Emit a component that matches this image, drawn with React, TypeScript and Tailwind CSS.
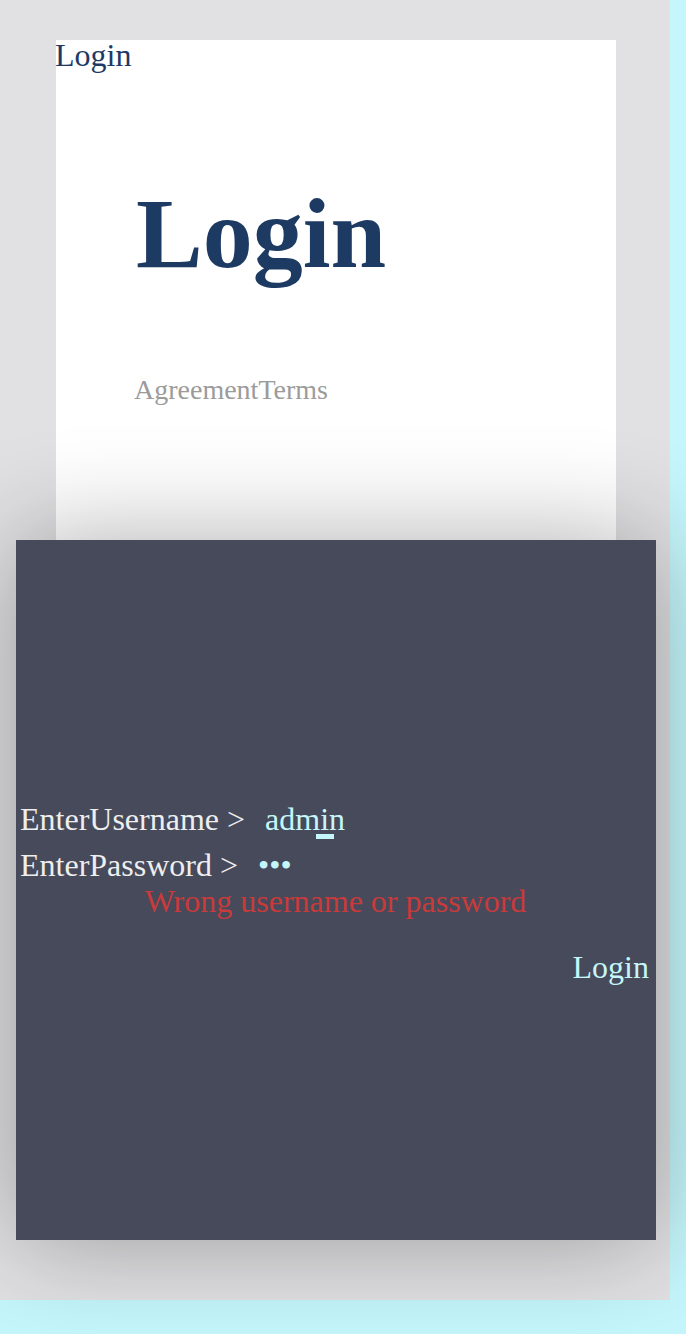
import React from 'react';

export default function App() {
    return (
        <div className="min-h-screen w-full bg-[#c4f6fb] font-['Liberation_Serif',serif]">
            {/* gray page area */}
            <div className="w-[670px] h-[1300px] bg-[#e1e1e3] pt-10">
                {/* white card */}
                <div className="ml-[56px] w-[560px] h-[500px] bg-white flex flex-col">
                    <div className="text-[32px] leading-[31px] text-[#1e3a64] -ml-px">Login</div>
                    <div className="pl-[80px] mt-[105px]">
                        <h1 className="text-[100px] leading-[115px] font-bold text-[#1d3a63]">Login</h1>
                        <div className="mt-[83px] -ml-0.5 text-[28px] leading-[32px] text-[#9b9b9b]">
                            <span>Agreement</span>
                            <span>Terms</span>
                        </div>
                    </div>
                </div>

                {/* dark console panel */}
                <div className="relative z-10 ml-4 w-[640px] h-[700px] bg-[#474a5a] shadow-[0_0_100px_rgba(0,0,0,0.32)] pt-[261px] px-1 text-[32px]">
                    <div className="flex items-start h-[46px] leading-[37px]">
                        <span className="text-[#eeeeee]">EnterUsername &gt;</span>
                        <span className="ml-5 text-[#c4f6fb]">
                            adm
                            <span className="relative">
                                i
                                <span className="absolute left-[-4px] top-[33px] w-[18px] h-[5px] bg-[#c4f6fb]" />
                            </span>
                            n
                        </span>
                    </div>
                    <div className="flex items-start h-[37px] leading-[37px]">
                        <span className="text-[#eeeeee]">EnterPassword &gt;</span>
                        <span className="ml-5 text-[#c4f6fb]">•••</span>
                    </div>
                    <div className="text-center leading-[35px] text-[#c93a3a] -ml-px">Wrong username or password</div>
                    <div className="mt-[30px] flex justify-end pr-[3px]">
                        <button className="leading-[37px] text-[#c4f6fb]">Login</button>
                    </div>
                </div>
            </div>
        </div>
    );
}
